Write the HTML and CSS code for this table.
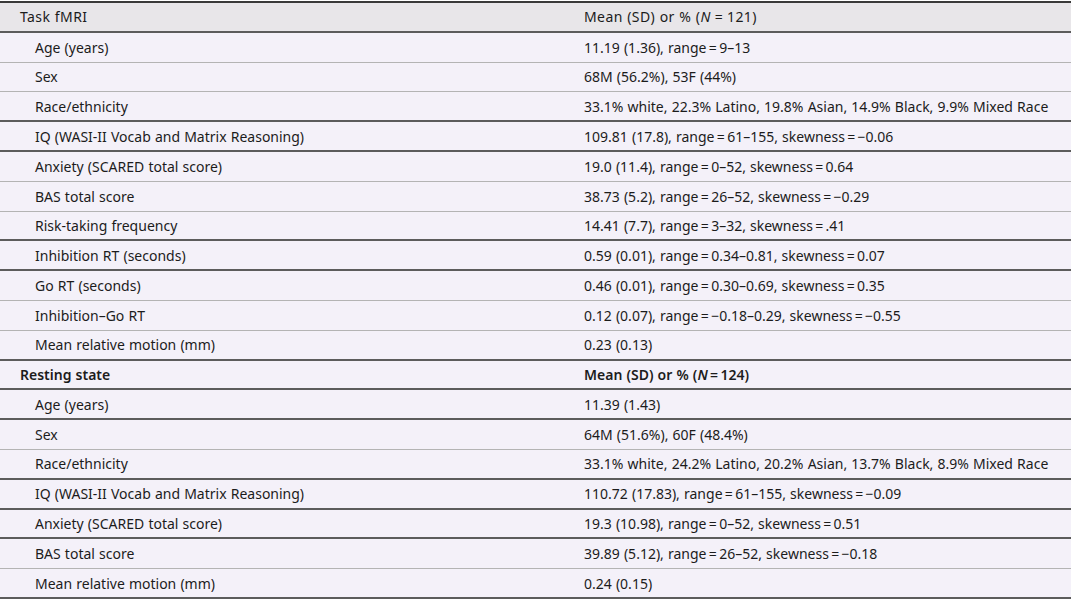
FILE: index.html
```html
<!DOCTYPE html>
<html lang="en">
<head>
<meta charset="utf-8">
<title>Participant characteristics</title>
<link rel="stylesheet" href="styles.css">
</head>
<body>
<div class="table">
  <div class="row head dark"><div class="c1">Task fMRI</div><div class="c2">Mean (SD) or % (<i>N</i>&#8197;=&#8197;121)</div></div>
  <div class="row light"><div class="c1 ind">Age (years)</div><div class="c2">11.19 (1.36), range&thinsp;=&thinsp;9–13</div></div>
  <div class="row light"><div class="c1 ind">Sex</div><div class="c2">68M (56.2%), 53F (44%)</div></div>
  <div class="row dark"><div class="c1 ind">Race/ethnicity</div><div class="c2">33.1% white, 22.3% Latino, 19.8% Asian, 14.9% Black, 9.9% Mixed Race</div></div>
  <div class="row dark"><div class="c1 ind">IQ (WASI-II Vocab and Matrix Reasoning)</div><div class="c2">109.81 (17.8), range&thinsp;=&thinsp;61–155, skewness&thinsp;=&thinsp;−0.06</div></div>
  <div class="row light"><div class="c1 ind">Anxiety (SCARED total score)</div><div class="c2">19.0 (11.4), range&thinsp;=&thinsp;0–52, skewness&thinsp;=&thinsp;0.64</div></div>
  <div class="row light"><div class="c1 ind">BAS total score</div><div class="c2">38.73 (5.2), range&thinsp;=&thinsp;26–52, skewness&thinsp;=&thinsp;−0.29</div></div>
  <div class="row dark"><div class="c1 ind">Risk-taking frequency</div><div class="c2">14.41 (7.7), range&thinsp;=&thinsp;3–32, skewness&thinsp;=&thinsp;.41</div></div>
  <div class="row dark"><div class="c1 ind">Inhibition RT (seconds)</div><div class="c2">0.59 (0.01), range&thinsp;=&thinsp;0.34–0.81, skewness&thinsp;=&thinsp;0.07</div></div>
  <div class="row light"><div class="c1 ind">Go RT (seconds)</div><div class="c2">0.46 (0.01), range&thinsp;=&thinsp;0.30–0.69, skewness&thinsp;=&thinsp;0.35</div></div>
  <div class="row light"><div class="c1 ind">Inhibition–Go RT</div><div class="c2">0.12 (0.07), range&thinsp;=&thinsp;−0.18–0.29, skewness&thinsp;=&thinsp;−0.55</div></div>
  <div class="row dark"><div class="c1 ind">Mean relative motion (mm)</div><div class="c2">0.23 (0.13)</div></div>
  <div class="row sub dark"><div class="c1">Resting state</div><div class="c2">Mean (SD) or % (<i>N</i>&thinsp;=&thinsp;124)</div></div>
  <div class="row dark"><div class="c1 ind">Age (years)</div><div class="c2">11.39 (1.43)</div></div>
  <div class="row light"><div class="c1 ind">Sex</div><div class="c2">64M (51.6%), 60F (48.4%)</div></div>
  <div class="row dark"><div class="c1 ind">Race/ethnicity</div><div class="c2">33.1% white, 24.2% Latino, 20.2% Asian, 13.7% Black, 8.9% Mixed Race</div></div>
  <div class="row dark"><div class="c1 ind">IQ (WASI-II Vocab and Matrix Reasoning)</div><div class="c2">110.72 (17.83), range&thinsp;=&thinsp;61–155, skewness&thinsp;=&thinsp;−0.09</div></div>
  <div class="row dark"><div class="c1 ind">Anxiety (SCARED total score)</div><div class="c2">19.3 (10.98), range&thinsp;=&thinsp;0–52, skewness&thinsp;=&thinsp;0.51</div></div>
  <div class="row light"><div class="c1 ind">BAS total score</div><div class="c2">39.89 (5.12), range&thinsp;=&thinsp;26–52, skewness&thinsp;=&thinsp;−0.18</div></div>
  <div class="row dark"><div class="c1 ind">Mean relative motion (mm)</div><div class="c2">0.24 (0.15)</div></div>
</div>
</body>
</html>
```

FILE: styles.css
```css
html, body {
  margin: 0;
  padding: 0;
  background: #ffffff;
}
body {
  font-family: "Noto Sans", "Open Sans", sans-serif;
  font-size: 14px;
  color: #1c1c1c;
}
.table {
  width: 1071px;
  margin-top: 1px;
  border-top: 2px solid #3a3a3a;
}
.row {
  display: grid;
  grid-template-columns: 584px 1fr;
  align-items: center;
  height: 29.8px;
  box-sizing: border-box;
  background: #f4f1f9;
  word-spacing: 0.5px;
}
.row.head {
  background: #e8e6e9;
  letter-spacing: 0.4px;
}
.row.dark {
  border-bottom: 2px solid #5c5c5c;
}
.row.light {
  border-bottom: 1px solid #b4b4b4;
}
.row.sub {
  font-weight: 600;
}
.c1 {
  padding-left: 20px;
  white-space: nowrap;
}
.c1.ind {
  padding-left: 35px;
}
.c2 {
  white-space: nowrap;
}
.row > div {
  line-height: 17px;
}
```
